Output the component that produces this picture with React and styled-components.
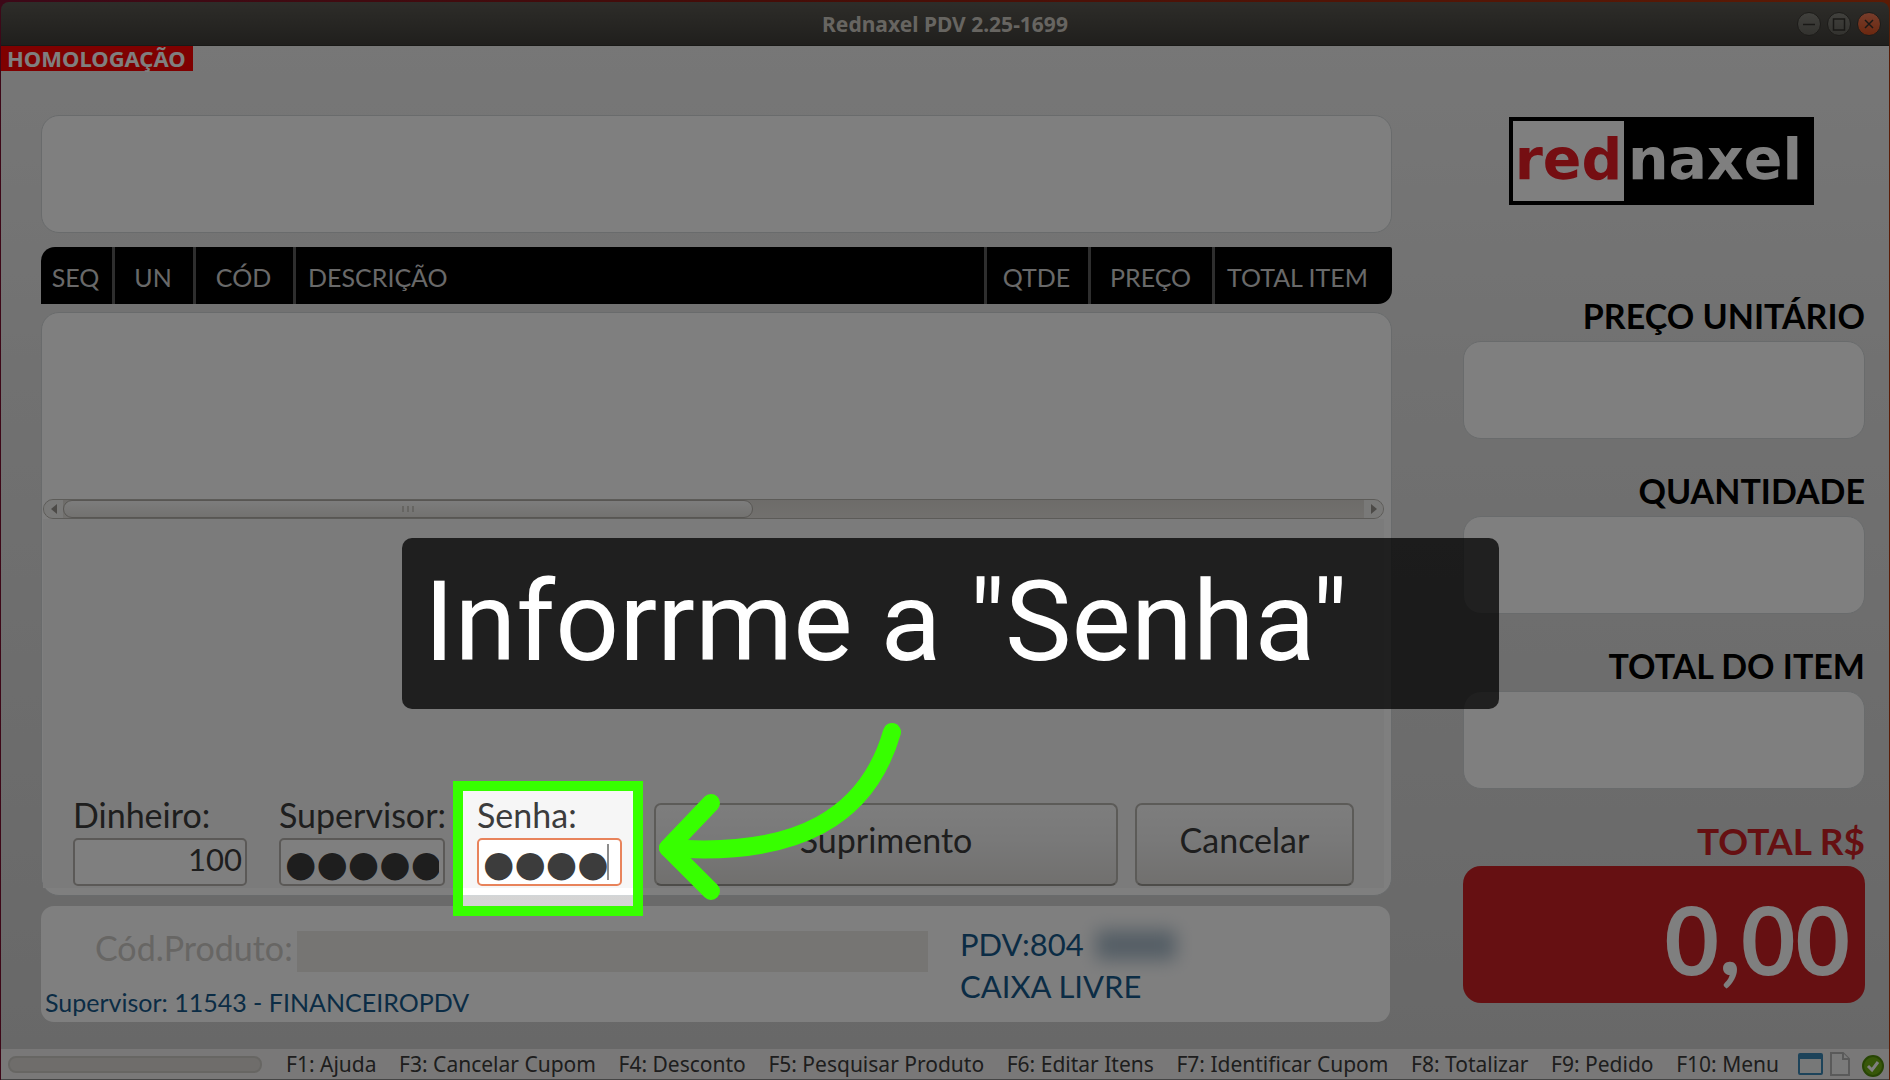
import React from 'react';
import styled, { createGlobalStyle } from 'styled-components';

const GlobalStyle = createGlobalStyle`
  * {
    box-sizing: border-box;
  }

  body {
    margin: 0;
    background: #55203a;
    font-family: Lato, 'Open Sans', sans-serif;
    color: #3c3c3c;
  }

  input,
  button,
  output {
    font-family: inherit;
    color: inherit;
  }
`;

const Desktop = styled.div`
  min-height: 100vh;
  display: flex;
  flex-direction: column;
  padding: 2px 1px 0;
  overflow: hidden;
  background: linear-gradient(90deg, #7a1030, #8c1a10 40%, #b8360a);
`;

const TitleBar = styled.header`
  display: grid;
  grid-template-columns: 1fr auto 1fr;
  align-items: center;
  height: 44px;
  padding: 0 8px;
  border-radius: 8px 8px 0 0;
  border-bottom: 1px solid #33322e;
  background: linear-gradient(#5c5a53, #403e3a);
`;

const Title = styled.h1`
  grid-column: 2;
  margin: 0;
  font: 700 21px/24px 'Noto Sans', sans-serif;
  color: #cfcbc2;
`;

const WindowButtons = styled.div`
  display: flex;
  justify-content: flex-end;
  gap: 6px;
`;

const WindowButton = styled.button`
  display: block;
  width: 24px;
  height: 24px;
  padding: 0;
  border: 1px solid #3a3833;
  border-radius: 50%;
  background: ${({ $close }) =>
    $close ? 'linear-gradient(#ee7a56, #d6501f)' : 'linear-gradient(#82817a, #66655e)'};
  color: #33312c;

  svg {
    display: block;
  }
`;

const Window = styled.main`
  flex: 1;
  display: flex;
  flex-direction: column;
  background: linear-gradient(#eeeeee, #e2e2e2 33%, #d0d0d0);
`;

const Tag = styled.strong`
  align-self: flex-start;
  padding: 0 7px 0 6px;
  background: #ff0000;
  color: #fff;
  font: 700 22px/25px 'Noto Sans', sans-serif;
`;

const Content = styled.div`
  flex: 1;
  display: grid;
  grid-template-columns: minmax(0, 1fr) 402px;
  gap: 71px;
  padding: 44px 24px 27px 40px;
`;

const Sale = styled.div`
  display: flex;
  flex-direction: column;
`;

const panel = `
  background: #fff;
  border: 1px solid #d2d6d8;
  border-radius: 18px;
`;

const Display = styled.div`
  ${panel}
  height: 118px;
`;

const ItemsHeader = styled.table`
  width: 100%;
  height: 57px;
  margin: 14px 0 8px;
  table-layout: fixed;
  border-spacing: 0;
  border-radius: 14px 2px 14px 0;
  background: #000;
  color: #d2d2d2;
  font-size: 25px;
`;

const Column = styled.th`
  width: ${({ $width }) => $width || 'auto'};
  padding: ${({ $indent }) => ($indent ? '2px 0 0 12px' : '2px 2px 0 0')};
  text-align: ${({ $indent }) => ($indent ? 'left' : 'center')};
  font-weight: 400;

  & + & {
    border-left: 3px solid #5c5c5c;
  }
`;

const Items = styled.section`
  ${panel}
  flex: 1;
  display: flex;
  flex-direction: column;
  padding: 0 7px 7px 1px;
`;

const ItemsArea = styled.div`
  height: 186px;
`;

const ScrollBar = styled.div`
  display: flex;
  align-items: stretch;
  height: 20px;
  border: 1px solid #b9b6b0;
  border-radius: 10px;
  background: linear-gradient(#dbd8d3, #e4e1dc);
  overflow: hidden;
`;

const ScrollArrow = styled.button`
  width: 19px;
  padding: 0;
  border: 0;
  background: #f3f2f0;
  color: #98958f;

  svg {
    display: block;
    margin: auto;
  }
`;

const ScrollTrack = styled.div`
  flex: 1;
`;

const ScrollThumb = styled.div`
  display: flex;
  align-items: center;
  justify-content: center;
  width: 53%;
  height: 18px;
  border: 1px solid #b0ada7;
  border-radius: 10px;
  background: linear-gradient(#fafafa, #e6e4e0);
  color: #cdcac4;
`;

const Payment = styled.form`
  flex: 1;
  display: flex;
  align-items: flex-end;
  gap: 32px;
  padding: 0 30px 2px;
  background: #f6f6f6;
`;

const Field = styled.div`
  position: relative;
  display: flex;
  flex-direction: column;
  gap: 4px;
  width: ${({ $width }) => $width};
`;

const FieldLabel = styled.label`
  font-size: 34px;
  line-height: 38px;
`;

const FieldInput = styled.input`
  width: 100%;
  height: 48px;
  padding: 0 3px 6px;
  border: 2px solid ${({ $active }) => ($active ? '#e8835b' : '#b6b3ae')};
  border-radius: 5px;
  background: #fff;
  font-size: 31px;
  text-align: right;
  outline: 0;
`;

const SecretInput = styled(FieldInput)`
  padding: 2px 4px 0;
  font-family: 'DejaVu Sans', sans-serif;
  font-size: 36px;
  text-align: left;
`;

const Caret = styled.span`
  position: absolute;
  left: 130px;
  bottom: 6px;
  width: 2px;
  height: 36px;
  background: #8c8c8c;
`;

const Actions = styled.div`
  flex: 1;
  display: flex;
  gap: 17px;
`;

const Action = styled.button`
  flex: ${({ $width }) => ($width ? `0 0 ${$width}` : '1')};
  height: 83px;
  padding: 0 0 10px;
  border: 2px solid #b9b6b1;
  border-bottom-color: #9b9893;
  border-radius: 7px;
  background: linear-gradient(#fbfbfb, #f2f2f2 45%, #e2e0dd);
  font-size: 34px;
`;

const Spotlight = styled.div`
  position: absolute;
  z-index: 1;
  top: -15px;
  left: -24px;
  width: 190px;
  height: 135px;
  border: 10px solid #37ff00;
  box-shadow: 0 0 0 9999px rgba(0, 0, 0, 0.5);
  pointer-events: none;
`;

const Callout = styled.p`
  position: absolute;
  z-index: 2;
  top: -258px;
  left: -75px;
  width: 1097px;
  height: 171px;
  margin: 0;
  padding: 0 22px;
  border-radius: 10px;
  background: rgba(0, 0, 0, 0.75);
  color: #fff;
  font: 400 112px/168px Roboto, sans-serif;
  white-space: nowrap;
`;

const Arrow = styled.svg`
  position: absolute;
  z-index: 2;
  top: -76px;
  left: 173px;
  fill: none;
  stroke: #37ff00;
  stroke-width: 18px;
  stroke-linecap: round;
  stroke-linejoin: round;
  pointer-events: none;
`;

const Product = styled.section`
  display: grid;
  grid-template-columns: 1fr 430px;
  gap: 32px;
  height: 116px;
  margin: 10px 2px 0 0;
  border-radius: 13px;
  background: #fff;
`;

const ProductEntry = styled.div`
  display: flex;
  flex-direction: column;
  justify-content: space-between;
  padding: 25px 0 3px;
`;

const ProductRow = styled.div`
  display: flex;
  align-items: center;
  gap: 4px;
  padding-left: 54px;

  label {
    padding-bottom: 7px;
    color: #cfccc8;
    font-size: 34px;
    line-height: 34px;
  }

  input {
    flex: 1;
    height: 41px;
    border: 0;
    background: #edebe6;
  }
`;

const Operator = styled.p`
  margin: 0 4px;
  color: #16598a;
  font-size: 25px;
  line-height: 34px;
`;

const Terminal = styled.p`
  margin: 17px 0 0;
  color: #16598a;
  font-size: 31px;
  line-height: 42px;
`;

const Redacted = styled.span`
  display: inline-block;
  width: 80px;
  height: 30px;
  margin-left: 12px;
  background: #a9bccb;
  filter: blur(9px);
  vertical-align: -4px;
`;

const Totals = styled.aside`
  display: flex;
  flex-direction: column;
  gap: 32px;
`;

const Logo = styled.div`
  display: flex;
  align-self: center;
  width: 305px;
  height: 88px;
  margin: 2px 5px 59px 0;
  padding: 4px;
  background: #000;
  color: #fff;
  font: 700 57px/76px 'DejaVu Sans', sans-serif;

  span {
    width: 111px;
    margin-right: 4px;
    background: #fff;
    color: #ea1c24;
    text-align: center;
  }
`;

const Amount = styled.div`
  display: flex;
  flex-direction: column;
  gap: 5px;
  color: ${({ $total }) => ($total ? '#cc2024' : '#000')};

  label {
    font-size: ${({ $total }) => ($total ? '37px' : '34px')};
    font-weight: 700;
    line-height: 40px;
    text-align: right;
  }

  input {
    ${panel}
    width: 100%;
    height: 98px;
    padding: 0 16px;
    font-size: 48px;
    text-align: right;
  }

  output {
    height: 137px;
    padding: 12px 15px 0;
    border-radius: 18px;
    background: #cc2024;
    color: #fff;
    font-size: 94px;
    font-weight: 700;
    line-height: 121px;
    text-align: right;
  }
`;

const StatusBar = styled.footer`
  display: flex;
  align-items: center;
  height: 31px;
  padding: 0 5px 0 7px;
  border-bottom: 1px solid #8a8a8a;
  background: #f2f1f0;
`;

const Progress = styled.div`
  width: 254px;
  height: 17px;
  border: 2px solid #cfccc7;
  border-radius: 8px;
  background: #dedbd7;
`;

const Shortcuts = styled.ul`
  flex: 1;
  display: flex;
  justify-content: space-between;
  margin: 0 19px 0 24px;
  padding: 0;
  list-style: none;
  font: 400 21px/28px 'Noto Sans', sans-serif;
  white-space: nowrap;
`;

const StatusIcons = styled.div`
  display: flex;
  align-items: center;
  gap: 7px;

  svg:last-child {
    margin: 3px 0 0 5px;
  }
`;

const columns = [
  { name: 'SEQ', width: '71px' },
  { name: 'UN', width: '81px' },
  { name: 'CÓD', width: '100px' },
  { name: 'DESCRIÇÃO', indent: true },
  { name: 'QTDE', width: '104px' },
  { name: 'PREÇO', width: '124px' },
  { name: 'TOTAL ITEM', width: '180px', indent: true },
];

const shortcuts = [
  'F1: Ajuda',
  'F3: Cancelar Cupom',
  'F4: Desconto',
  'F5: Pesquisar Produto',
  'F6: Editar Itens',
  'F7: Identificar Cupom',
  'F8: Totalizar',
  'F9: Pedido',
  'F10: Menu',
];

const amounts = [
  { id: 'preco', label: 'PREÇO UNITÁRIO' },
  { id: 'quantidade', label: 'QUANTIDADE' },
  { id: 'total-item', label: 'TOTAL DO ITEM' },
];

const WindowIcon = ({ d }) => (
  <svg width="22" height="22" viewBox="0 0 22 22" fill="none" stroke="currentColor" strokeWidth="1.5">
    <path d={d} />
  </svg>
);

const PaymentForm = () => (
  <Payment onSubmit={(e) => e.preventDefault()}>
    <Field $width="174px">
      <FieldLabel htmlFor="dinheiro">Dinheiro:</FieldLabel>
      <FieldInput id="dinheiro" defaultValue="100" />
    </Field>
    <Field $width="166px">
      <FieldLabel htmlFor="supervisor">Supervisor:</FieldLabel>
      <SecretInput id="supervisor" defaultValue="●●●●●" />
    </Field>
    <Field $width="145px">
      <FieldLabel htmlFor="senha">Senha:</FieldLabel>
      <SecretInput id="senha" defaultValue="●●●●" $active />
      <Caret />
      <Spotlight />
      <Callout>Inforrme a "Senha"</Callout>
      <Arrow width="260" height="190" viewBox="650 720 260 190">
        <path d="M892 732C868 815 800 858 668 848" />
        <path d="M711 803L668 848L711 891" />
      </Arrow>
    </Field>
    <Actions>
      <Action type="submit">Suprimento</Action>
      <Action type="button" $width="219px">Cancelar</Action>
    </Actions>
  </Payment>
);

const App = () => (
  <Desktop>
    <GlobalStyle />
    <TitleBar>
      <Title>Rednaxel PDV 2.25-1699</Title>
      <WindowButtons>
        <WindowButton aria-label="Minimizar">
          <WindowIcon d="M5 11.5H17" />
        </WindowButton>
        <WindowButton aria-label="Maximizar">
          <WindowIcon d="M5.5 6H16.5V17H5.5Z" />
        </WindowButton>
        <WindowButton aria-label="Fechar" $close>
          <WindowIcon d="M7 7L15 15M15 7L7 15" />
        </WindowButton>
      </WindowButtons>
    </TitleBar>
    <Window>
      <Tag>HOMOLOGAÇÃO</Tag>
      <Content>
        <Sale>
          <Display />
          <ItemsHeader>
            <thead>
              <tr>
                {columns.map(({ name, width, indent }) => (
                  <Column key={name} $width={width} $indent={indent}>{name}</Column>
                ))}
              </tr>
            </thead>
          </ItemsHeader>
          <Items>
            <ItemsArea />
            <ScrollBar>
              <ScrollArrow aria-label="Rolar para a esquerda">
                <svg width="6" height="10" fill="currentColor"><path d="M6 0V10L0 5Z" /></svg>
              </ScrollArrow>
              <ScrollTrack>
                <ScrollThumb>
                  <svg width="12" height="6" stroke="currentColor" strokeWidth="2">
                    <path d="M1 0V6M6 0V6M11 0V6" />
                  </svg>
                </ScrollThumb>
              </ScrollTrack>
              <ScrollArrow aria-label="Rolar para a direita">
                <svg width="6" height="10" fill="currentColor"><path d="M0 0V10L6 5Z" /></svg>
              </ScrollArrow>
            </ScrollBar>
            <PaymentForm />
          </Items>
          <Product>
            <ProductEntry>
              <ProductRow>
                <label htmlFor="produto">Cód.Produto:</label>
                <input id="produto" disabled />
              </ProductRow>
              <Operator>Supervisor: 11543 - FINANCEIROPDV</Operator>
            </ProductEntry>
            <Terminal>
              PDV:804<Redacted />
              <br />
              CAIXA LIVRE
            </Terminal>
          </Product>
        </Sale>
        <Totals>
          <Logo>
            <span>red</span>naxel
          </Logo>
          {amounts.map(({ id, label }) => (
            <Amount key={id}>
              <label htmlFor={id}>{label}</label>
              <input id={id} readOnly />
            </Amount>
          ))}
          <Amount $total>
            <label htmlFor="total">TOTAL R$</label>
            <output id="total">0,00</output>
          </Amount>
        </Totals>
      </Content>
      <StatusBar>
        <Progress />
        <Shortcuts>
          {shortcuts.map((text) => (
            <li key={text}>{text}</li>
          ))}
        </Shortcuts>
        <StatusIcons>
          <svg width="25" height="22" viewBox="0 0 25 22">
            <rect x="1" y="1" width="23" height="20" rx="1" fill="#eef0f0" stroke="#3a86b4" strokeWidth="2" />
            <path d="M2 4H23" stroke="#3a86b4" strokeWidth="4" />
          </svg>
          <svg width="20" height="24" viewBox="0 0 20 24" fill="#f4f4f4" stroke="#b5b5b5" strokeWidth="2">
            <path d="M1 1H13L19 7V23H1Z" />
            <path d="M13 1V7H19" />
          </svg>
          <svg width="22" height="22" viewBox="0 0 22 22">
            <circle cx="11" cy="11" r="10" fill="#6fae12" stroke="#4f8a08" strokeWidth="2" />
            <path d="M6 11L10 15L16 7" fill="none" stroke="#fff" strokeWidth="3" />
          </svg>
        </StatusIcons>
      </StatusBar>
    </Window>
  </Desktop>
);

export default App;
